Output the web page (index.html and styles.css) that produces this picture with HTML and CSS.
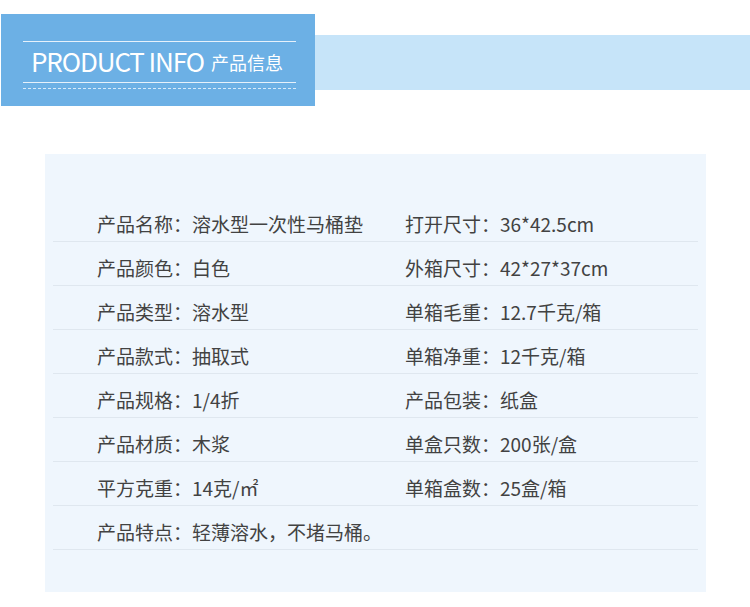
FILE: index.html
```html
<!DOCTYPE html>
<html lang="zh-CN">
<head>
<meta charset="utf-8">
<title>产品信息</title>
<link rel="stylesheet" href="styles.css">
</head>
<body>
<header class="banner">
  <div class="tag">
    <div class="tag-title">
      <span class="tag-en">PRODUCT INFO</span>
      <span class="tag-cn">产品信息</span>
    </div>
    <div class="tag-dash"></div>
  </div>
  <div class="strip"></div>
</header>
<section class="panel">
  <div class="row">
    <div class="cell"><span class="label">产品名称：</span><span class="value">溶水型一次性马桶垫</span></div>
    <div class="cell"><span class="label">打开尺寸：</span><span class="value">36*42.5cm</span></div>
  </div>
  <div class="row">
    <div class="cell"><span class="label">产品颜色：</span><span class="value">白色</span></div>
    <div class="cell"><span class="label">外箱尺寸：</span><span class="value">42*27*37cm</span></div>
  </div>
  <div class="row">
    <div class="cell"><span class="label">产品类型：</span><span class="value">溶水型</span></div>
    <div class="cell"><span class="label">单箱毛重：</span><span class="value">12.7千克/箱</span></div>
  </div>
  <div class="row">
    <div class="cell"><span class="label">产品款式：</span><span class="value">抽取式</span></div>
    <div class="cell"><span class="label">单箱净重：</span><span class="value">12千克/箱</span></div>
  </div>
  <div class="row">
    <div class="cell"><span class="label">产品规格：</span><span class="value">1/4折</span></div>
    <div class="cell"><span class="label">产品包装：</span><span class="value">纸盒</span></div>
  </div>
  <div class="row">
    <div class="cell"><span class="label">产品材质：</span><span class="value">木浆</span></div>
    <div class="cell"><span class="label">单盒只数：</span><span class="value">200张/盒</span></div>
  </div>
  <div class="row">
    <div class="cell"><span class="label">平方克重：</span><span class="value">14克/㎡</span></div>
    <div class="cell"><span class="label">单箱盒数：</span><span class="value">25盒/箱</span></div>
  </div>
  <div class="row">
    <div class="cell"><span class="label">产品特点：</span><span class="value">轻薄溶水，不堵马桶。</span></div>
    <div class="cell"></div>
  </div>
</section>
</body>
</html>
```

FILE: styles.css
```css
* {
  box-sizing: border-box;
}

html, body {
  margin: 0;
  padding: 0;
  background: #ffffff;
}

body {
  width: 750px;
  height: 607px;
  overflow: hidden;
  font-family: "Noto Sans CJK SC", "Noto Sans", sans-serif;
  color: #424242;
}

.banner {
  display: flex;
  align-items: flex-start;
  margin-top: 14px;
  height: 92px;
}

.tag {
  width: 314px;
  height: 92px;
  margin-left: 1px;
  background: #6cb0e5;
  padding: 27px 19px 0 22px;
}

.tag-title {
  height: 42px;
  border-top: 1px solid #e6f1fb;
  border-bottom: 1px solid #e6f1fb;
  display: flex;
  align-items: center;
  padding-left: 8px;
  color: #ffffff;
  white-space: nowrap;
}

.tag-en {
  font-size: 26px;
  font-weight: 400;
  line-height: 1;
  letter-spacing: -1.1px;
  margin-top: -2px;
}

.tag-cn {
  font-size: 18px;
  font-weight: 400;
  line-height: 1;
  margin-left: 7px;
}

.tag-dash {
  height: 1px;
  margin-top: 5px;
  background: repeating-linear-gradient(to right, #d8eaf9 0 3px, transparent 3px 5px);
}

.strip {
  flex: 1;
  margin-top: 21px;
  height: 55px;
  background: #c6e4f9;
}

.panel {
  margin: 48px 44px 0 45px;
  height: 438px;
  background: #eff6fd;
  padding: 44px 8px 0 8px;
}

.row {
  display: grid;
  grid-template-columns: 352px 1fr;
  height: 44px;
  border-bottom: 1px solid #dfe7ef;
}

.cell {
  display: flex;
  align-items: center;
  padding-top: 8px;
  font-size: 19px;
  line-height: 1;
  white-space: nowrap;
}

.cell:first-child {
  padding-left: 44px;
}

.label {
  width: 95px;
  flex: none;
}
```
